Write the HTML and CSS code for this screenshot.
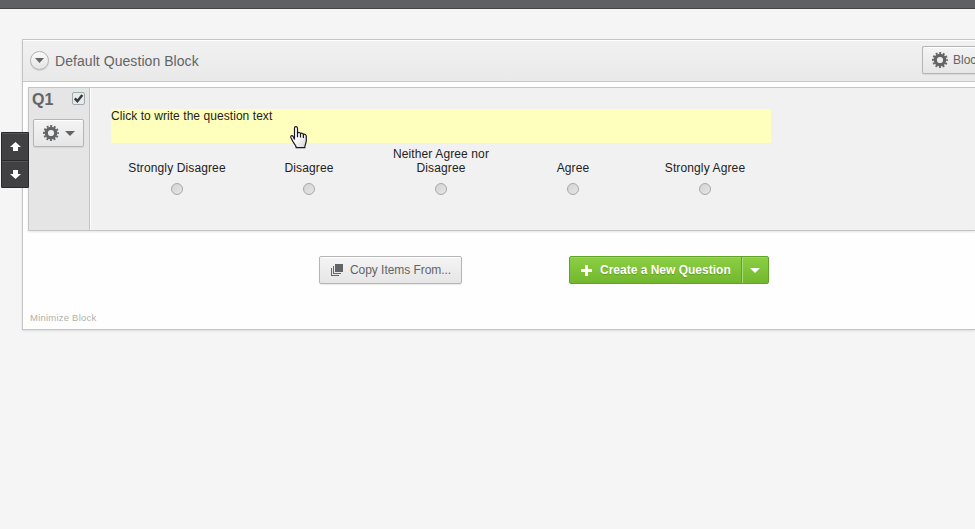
FILE: index.html
```html
<!DOCTYPE html>
<html lang="en">
<head>
<meta charset="utf-8">
<title>Survey Editor</title>
<link rel="stylesheet" href="styles.css">
</head>
<body>
<svg class="defs" width="0" height="0" aria-hidden="true">
  <symbol id="gear" viewBox="0 0 16 16">
    <circle cx="8" cy="8" r="4.7" fill="none" stroke="#636466" stroke-width="3.2"/>
    <circle cx="8" cy="8" r="7" fill="none" stroke="#636466" stroke-width="1.9" stroke-dasharray="2 1.665" stroke-dashoffset="1"/>
  </symbol>
</svg>
<div class="topbar"></div>
<main class="block">
  <header class="block-header">
    <button class="collapse"><svg width="9" height="5"><path d="M0 0h9L4.5 5z" fill="#636466"/></svg></button>
    <h1><span>Default Question Block</span></h1>
    <button class="btn block-options"><svg width="16" height="16"><use href="#gear"/></svg><span>Block</span></button>
  </header>
  <section class="question">
    <aside class="side">
      <div class="side-top">
        <b class="qid">Q1</b>
        <svg class="check" width="13" height="13" viewBox="0 0 13 13"><rect x=".5" y=".5" width="12" height="12" rx="1.5" fill="#e9eaea" stroke="#9eaaad"/><path d="M2.8 6.4l2.6 2.8L10.3 3" fill="none" stroke="#38393b" stroke-width="2.5"/></svg>
      </div>
      <button class="btn gear-btn"><svg width="16" height="16"><use href="#gear"/></svg><svg width="10" height="5"><path d="M0 0h10L5 5z" fill="#636466"/></svg></button>
      <div class="mover">
        <button><svg width="11" height="9"><path d="M5.5 0L11 5H8v4H3V5H0z" fill="#fff"/></svg></button>
        <button><svg width="11" height="9"><path d="M5.5 9L11 4H8V0H3v4H0z" fill="#fff"/></svg></button>
      </div>
    </aside>
    <div class="content">
      <div class="prompt"><span>Click to write the question text</span></div>
      <div class="scale">
        <label><span>Strongly Disagree</span><i></i></label>
        <label><span>Disagree</span><i></i></label>
        <label><span>Neither Agree nor<br>Disagree</span><i></i></label>
        <label><span>Agree</span><i></i></label>
        <label><span>Strongly Agree</span><i></i></label>
      </div>
    </div>
  </section>
  <div class="actions">
    <button class="btn copy"><svg width="13" height="13" viewBox="0 0 13 13" shape-rendering="crispEdges"><path d="M4 0h8v8H4zM2 2h1v7h7v1H2zM0 4h1v7h7v1H0z" fill="#636466"/></svg><span>Copy Items From...</span></button>
    <div class="create">
      <button class="create-main"><svg width="11" height="11" shape-rendering="crispEdges"><path d="M4 0h3v4h4v3H7v4H4V7H0V4h4z" fill="#fff"/></svg><span>Create a New Question</span></button>
      <button class="create-more"><svg width="10" height="5"><path d="M0 0h10L5 5z" fill="#fff"/></svg></button>
    </div>
  </div>
  <a class="minimize"><span>Minimize Block</span></a>
</main>
<svg class="cursor" width="18" height="23" viewBox="0 0 18 23">
  <defs><linearGradient id="hand" x2="1" y2="1"><stop offset=".45" stop-color="#fff"/><stop offset="1" stop-color="#d4d4d4"/></linearGradient></defs>
  <path d="M4.5 13.5V2.2C4.5.2 7.3.2 7.5 2.2v5c.6-1.2 2.7-.9 3 .5.8-.9 2.5-.5 2.9.8 1.1-.7 2.9 0 2.9 1.7v4.3c0 2.6-1.5 3.8-1.5 7.2H6.2c-.3-2.8-2.1-3.6-3.3-6.1L1 11.7c-.8-1.9 1.1-2.7 2.2-1.2z" fill="url(#hand)" stroke="#17182a" stroke-width="1.2"/>
  <path d="M7.5 6.5v4.7M10.5 7.5v3.9M13.4 8.5v3.6" fill="none" stroke="#17182a" stroke-width="1.2"/>
</svg>
</body>
</html>
```
FILE: styles.css
```css
* { box-sizing: border-box; }
body {
  margin: 0;
  height: 529px;
  overflow: hidden;
  background: #f5f5f5;
  color: #222;
  font: 12px/14px "Liberation Sans", Arial, sans-serif;
}
button { font: inherit; padding: 0; margin: 0; color: inherit; }
svg { display: block; flex: none; }
.defs { position: absolute; }
.topbar { height: 9px; background: #5f6062; border-bottom: 1px solid #424345; }
.block {
  height: 291px;
  margin: 30px 0 0 22px;
  background: #fefefe;
  border: 1px solid #c4c4c5;
  border-right: 0;
  box-shadow: 0 1px 2px rgba(0, 0, 0, .1);
}
.block-header {
  display: flex;
  align-items: center;
  height: 42px;
  padding-left: 7px;
  overflow: hidden;
  background: linear-gradient(#f1f1f1, #e9e9e9);
  border-bottom: 1px solid #c8c8c9;
  box-shadow: inset 0 1px #fff;
}
.collapse {
  display: flex;
  flex: none;
  align-items: center;
  justify-content: center;
  width: 19px;
  height: 19px;
  border: 1px solid #b3b3b4;
  border-radius: 50%;
  background: linear-gradient(#fafafa, #e4e4e4);
  box-shadow: 0 1px 1px rgba(0, 0, 0, .12);
}
h1 {
  flex: none;
  width: 867px;
  margin: 0 0 0 6px;
  color: #636466;
  font-size: 14px;
  font-weight: normal;
  letter-spacing: .06px;
  line-height: 18px;
}
.btn {
  display: flex;
  align-items: center;
  height: 28px;
  border: 1px solid #b5b5b6;
  border-radius: 2px;
  background: linear-gradient(#f4f4f4, #e6e6e6);
  box-shadow: inset 0 1px #fff, 0 1px 1px rgba(0, 0, 0, .08);
  color: #636466;
  white-space: nowrap;
}
.block-options {
  flex: 1;
  min-width: 0;
  padding-left: 9px;
  gap: 5px;
  margin-top: -1px;
  border-right: 0;
  border-radius: 2px 0 0 2px;
  overflow: hidden;
}
.question {
  display: flex;
  height: 144px;
  margin: 5px 0 0 5px;
  border: 1px solid #c4c4c5;
  border-right: 0;
  background: #f1f1f1;
  box-shadow: 0 1px 2px rgba(0, 0, 0, .1);
}
.side {
  position: relative;
  width: 61px;
  padding: 3px 4px;
  background: #e5e5e5;
  border-right: 1px solid #c4c4c5;
  box-shadow: 1px 0 #fff;
}
.side-top { display: flex; justify-content: space-between; height: 28px; }
.qid { margin-left: -1px; color: #636466; font-size: 16px; line-height: 18px; }
.check { margin-top: 1px; }
.gear-btn { width: 51px; padding-left: 9px; gap: 6px; }
.mover {
  position: absolute;
  top: 44px;
  left: -28px;
  width: 28px;
  height: 56px;
  border-radius: 2px;
  background: #414042;
  overflow: hidden;
}
.mover button {
  display: flex;
  align-items: center;
  justify-content: center;
  width: 28px;
  height: 28px;
  border: 1px solid #29292b;
  border-bottom-width: 0;
  background: #414042;
  box-shadow: inset 0 1px #505564;
}
.mover button:last-child { border-bottom-width: 1px; }
.content { padding: 21px 0 0 21px; letter-spacing: .06px; }
.prompt { width: 660px; height: 34px; background: #ffffbd; }
.scale { display: grid; grid-template-columns: repeat(5, 132px); margin-top: 4px; letter-spacing: .12px; }
.scale label {
  display: flex;
  flex-direction: column;
  align-items: center;
  justify-content: flex-end;
  text-align: center;
}
.scale i {
  width: 12px;
  height: 12px;
  margin: 8px 0 0;
  border: 1px solid #a8a8a8;
  border-radius: 50%;
  background: linear-gradient(135deg, #d4d4d4, #e5e5e5);
}
.actions { display: flex; gap: 107px; margin: 25px 0 0 296px; }
.copy { width: 143px; padding-left: 11px; gap: 6px; letter-spacing: -.05px; }
.create {
  display: flex;
  width: 200px;
  height: 28px;
  border: 1px solid #61a326;
  border-radius: 2px;
  background: linear-gradient(#8ccf45, #72b72d);
  box-shadow: inset 0 1px #9bd65e;
  color: #fff;
  font-weight: bold;
}
.create button { display: flex; align-items: center; border: 0; background: none; }
.create .create-main {
  width: 172px;
  padding-left: 11px;
  gap: 8px;
  border-right: 1px solid #61a326;
  white-space: nowrap;
  text-shadow: 0 1px 1px rgba(0, 0, 0, .2);
}
.create .create-more { width: 26px; justify-content: center; box-shadow: inset 1px 0 #a9dc74; }
.minimize {
  display: block;
  margin: 28px 0 0 7px;
  color: #b0b1aa;
  font-size: 9.5px;
  letter-spacing: .22px;
  line-height: 12px;
}
.cursor { position: absolute; left: 290px; top: 126px; }
```
